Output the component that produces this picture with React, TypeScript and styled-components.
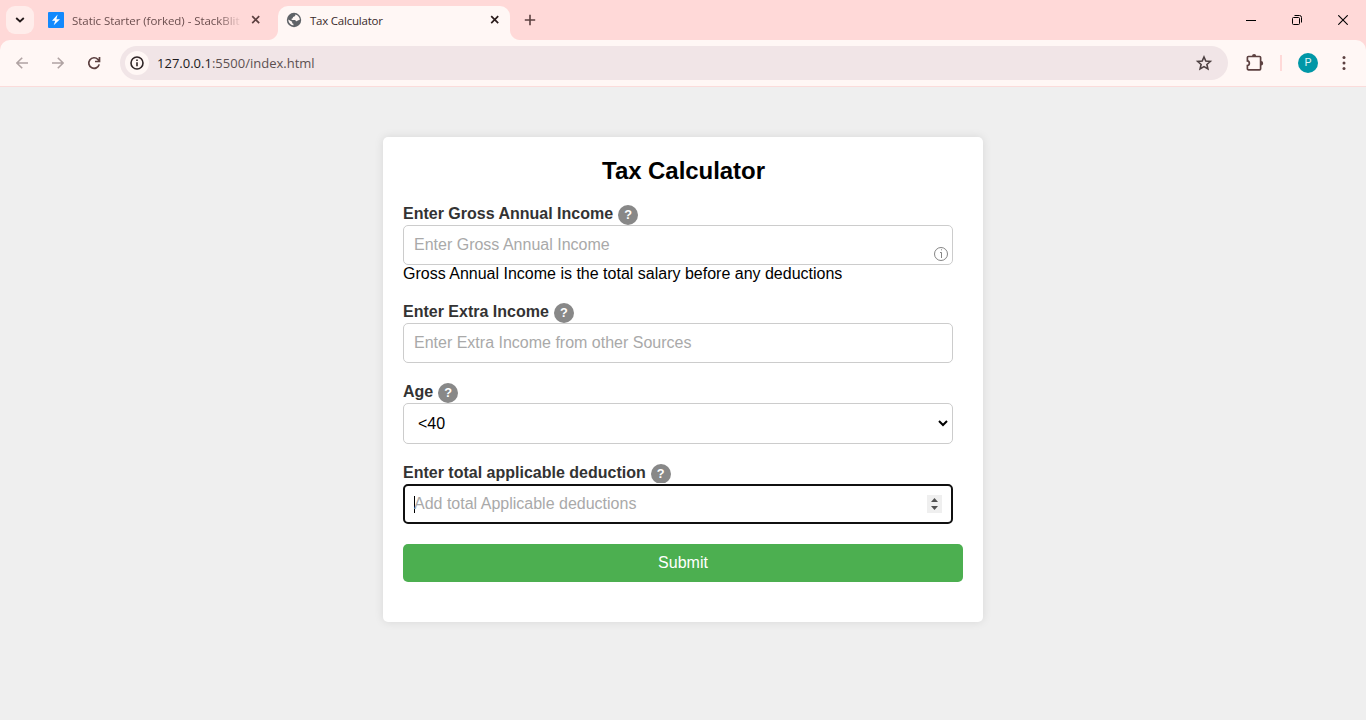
import React from "react";
import styled, { createGlobalStyle } from "styled-components";

const GlobalStyle = createGlobalStyle`
  *, *::before, *::after { box-sizing: border-box; }
  body { margin: 0; background: #efefef; font-family: "Liberation Sans", Arial, sans-serif; }
`;

const Window = styled.div`
  width: 1366px;
  height: 720px;
  overflow: hidden;
  background: #efefef;
`;

const TabStrip = styled.div`
  display: flex;
  height: 40px;
  background: #ffd9d8;
  font-family: "Open Sans", "Noto Sans", sans-serif;
`;

const TabSearch = styled.div`
  width: 28px;
  height: 28px;
  margin: 6px 0 0 6px;
  border-radius: 9px;
  background: #ffedeb;
  display: grid;
  place-items: center;
`;

const Tab = styled.div<{ $active?: boolean }>`
  position: relative;
  display: flex;
  align-items: center;
  width: ${(p) => (p.$active ? 232 : 230)}px;
  height: ${(p) => (p.$active ? 34 : 28)}px;
  margin: 6px 0 0 ${(p) => (p.$active ? 0 : 14)}px;
  padding: 0 9px ${(p) => (p.$active ? 6 : 0)}px ${(p) => (p.$active ? 8 : 0)}px;
  border-radius: 10px 10px 0 0;
  background: ${(p) => (p.$active ? "#fff7f5" : "transparent")};
  color: ${(p) => (p.$active ? "#3a2b2b" : "#6a4d4d")};

  &::before,
  &::after {
    content: "";
    display: ${(p) => (p.$active ? "block" : "none")};
    position: absolute;
    bottom: 0;
    width: 10px;
    height: 10px;
  }
  &::before {
    left: -10px;
    background: radial-gradient(circle at 0 0, transparent 9.5px, #fff7f5 10.5px);
  }
  &::after {
    right: -10px;
    background: radial-gradient(circle at 100% 0, transparent 9.5px, #fff7f5 10.5px);
  }
`;

const TabTitle = styled.span<{ $fade?: boolean }>`
  flex: none;
  width: 170px;
  margin-left: 8px;
  padding-top: 1px;
  white-space: nowrap;
  font-size: 11.5px;
  line-height: 18px;
  letter-spacing: ${(p) => (p.$fade ? "-0.05px" : "-0.22px")};
  ${(p) => p.$fade && "mask-image: linear-gradient(to right, #000 145px, transparent 171px);"}
`;

const TabClose = styled.span<{ $end: number }>`
  display: grid;
  place-items: center;
  margin: 0 ${(p) => p.$end}px 0 auto;
`;

const NewTab = styled.div`
  width: 12px;
  height: 40px;
  margin-left: 14px;
  display: grid;
  place-items: center;
`;

const WindowButtons = styled.div`
  display: flex;
  margin-left: auto;
`;

const WindowButton = styled.div`
  width: 46px;
  height: 40px;
  display: grid;
  place-items: center;
`;

const ToolbarBack = styled.div`
  background: #ffd9d8;
`;

const Toolbar = styled.div`
  display: flex;
  align-items: center;
  height: 47px;
  padding-left: 4px;
  border-radius: 10px 10px 0 0;
  border-bottom: 1px solid #fbdcdb;
  background: #fff7f5;
  font-family: "Open Sans", "Noto Sans", sans-serif;
`;

const ToolButton = styled.div`
  width: 36px;
  height: 34px;
  display: grid;
  place-items: center;
`;

const AddressBar = styled.div`
  display: flex;
  align-items: center;
  width: 1108px;
  height: 34px;
  margin-left: 8px;
  padding: 0 14px 0 5px;
  border-radius: 17px;
  background: #f1e5e7;
`;

const SiteInfo = styled.div`
  width: 24px;
  height: 24px;
  border-radius: 50%;
  background: #fff7f5;
  display: grid;
  place-items: center;
`;

const Address = styled.span`
  flex: 1;
  margin-left: 8px;
  font-size: 13px;
  line-height: 20px;
  letter-spacing: 0.01px;
  color: #5c5051;

  b {
    font-weight: 400;
    color: #201a1b;
  }
`;

const Extensions = styled.div`
  width: 20px;
  height: 20px;
  margin-left: 17px;
`;

const Divider = styled.div`
  width: 2px;
  height: 16px;
  margin-left: 15px;
  background: #ffd9d8;
`;

const Avatar = styled.div`
  width: 20px;
  height: 20px;
  margin-left: 16px;
  border-radius: 50%;
  background: #0097a7;
  color: #e0f4f5;
  font: 11px/20px Roboto, sans-serif;
  text-align: center;
`;

const MenuButton = styled.div`
  width: 20px;
  height: 20px;
  margin-left: 16px;
`;

const Page = styled.main`
  display: flex;
  justify-content: center;
  align-items: flex-start;
  padding-top: 50px;
`;

const Card = styled.form`
  width: 600px;
  height: 485px;
  padding: 20px;
  border-radius: 5px;
  background: #fff;
  box-shadow: 0 0 10px rgba(0, 0, 0, 0.1);
`;

const Title = styled.h2`
  margin: 0 0 20px;
  padding-left: 1px;
  font-size: 24px;
  line-height: 28px;
  letter-spacing: -0.05px;
  text-align: center;
  color: #000;
`;

const Field = styled.div`
  margin-bottom: 20px;
`;

const LabelRow = styled.div`
  display: flex;
  gap: 5px;
  height: 20px;
`;

const Label = styled.label`
  height: 18px;
  font-size: 16px;
  font-weight: 700;
  line-height: 18px;
  color: #333;
`;

const HelpDot = styled.span`
  width: 20px;
  height: 20px;
  border-radius: 50%;
  background: #888;
  color: #fff;
  font-size: 12.800px;
  font-weight: 700;
  line-height: 19px;
  text-align: center;
`;

const Control = styled.div<{ $kind?: "select" | "focused" }>`
  display: flex;
  align-items: center;
  position: relative;
  width: 550px;
  height: ${(p) => (p.$kind === "select" ? 41 : 40)}px;
  padding: 0 ${(p) => (p.$kind ? 4 : 3)}px 0 ${(p) => (p.$kind === "select" ? 14 : 10)}px;
  border: 1px solid #ccc;
  border-radius: 5px;
  background: #fff;
  font-size: 16px;
  line-height: 18px;
  color: ${(p) => (p.$kind === "select" ? "#000" : "#a9a9a9")};
  ${(p) =>
    p.$kind === "focused" &&
    `border: 2px solid #101010;
     padding: 0 9px;
     box-shadow: 0 -1px 0 #fff;`}
`;

const ControlText = styled.span`
  flex: 1;
`;

const SelectArrow = styled.svg`
  margin-top: -2px;
`;

const Caret = styled.span`
  width: 1px;
  height: 17px;
  margin: 1px -1px 0 0;
  background: #000;
`;

const InfoMark = styled.span`
  display: block;
  height: 16px;
  margin-top: 18px;
`;

const Spinner = styled.span`
  display: block;
  width: 15px;
  height: 18px;
  background: #efefef;
`;

const Hint = styled.p`
  margin: 0;
  font-size: 16px;
  line-height: 18px;
  color: #000;
`;

const Submit = styled.button`
  display: block;
  width: 560px;
  height: 38px;
  padding: 0 0 1px;
  border: 0;
  border-radius: 5px;
  background: #4caf50;
  color: #fff;
  font: 16px/18px "Liberation Sans", Arial, sans-serif;
`;

const Cross = ({ color }: { color: string }) => (
  <svg width="10" height="10" viewBox="0 0 10 10" fill="none" stroke={color} strokeWidth="1.7">
    <path d="m1.200 1.200 7 7M8.200 1.200l-7 7" />
  </svg>
);

const Arrow = ({ flip }: { flip?: boolean }) => (
  <svg width="12" height="12" viewBox="0 0 12 12" fill="none" stroke="#b0a3a3" strokeWidth="1.6">
    <path d={flip ? "M0 6h11M5.8.7 11.1 6 5.8 11.3" : "M12 6H1M6.2.7.9 6l5.3 5.3"} />
  </svg>
);

const FieldLabel = ({ text }: { text: string }) => (
  <LabelRow>
    <Label>{text}</Label>
    <HelpDot>?</HelpDot>
  </LabelRow>
);

const BrowserTabs = () => (
  <TabStrip>
    <TabSearch>
      <svg width="10" height="8" viewBox="0 0 10 8" fill="none" stroke="#231a1a" strokeWidth="1.8">
        <path d="m1.200 2 3.800 3.500L8.800 2" />
      </svg>
    </TabSearch>
    <Tab>
      <svg width="16" height="16" viewBox="0 0 16 16">
        <rect width="16" height="16" rx="1" fill="#1389fd" />
        <path d="M9.6 2.600 4 8.800h3.200l-1.500 4.500L12 7.200H8.400z" fill="#fff" />
      </svg>
      <TabTitle $fade>Static Starter (forked) - StackBlit</TabTitle>
      <TabClose $end={8}><Cross color="#5c4040" /></TabClose>
    </Tab>
    <Tab $active>
      <svg width="16" height="16" viewBox="0 0 16 16">
        <circle cx="8" cy="8" r="7.200" fill="#5f6368" />
        <path
          d="M9.200 2.400c.3 1-.1 1.700-1 2.100-.9.300-1.400.5-1.300 1.300 0 .6-.6.9-1.300.9-.3.900.2 1.200 1.100 1.200h1.800c1 0 1.300.6 1.400 1.400.8.100 1.300-.1 1.800-.7.500-.5 1-.7 2-.6.300-2.500-1.400-4.900-4.500-5.600zM2.300 7.600c0 2.900 2 5.400 5 5.800l.2-1.600c-1 0-1.400-.6-1.400-1.500v-.6z"
          fill="#fff7f5"
        />
      </svg>
      <TabTitle>Tax Calculator</TabTitle>
      <TabClose $end={1}><Cross color="#2b1c1c" /></TabClose>
    </Tab>
    <NewTab>
      <svg width="12" height="12" viewBox="0 0 12 12" fill="none" stroke="#5c4040" strokeWidth="1.6">
        <path d="M6 .8v10.400M.8 6h10.400" />
      </svg>
    </NewTab>
    <WindowButtons>
      <WindowButton>
        <svg width="10" height="10" viewBox="0 0 10 10"><path d="M0 5h10v1H0z" fill="#000" /></svg>
      </WindowButton>
      <WindowButton>
        <svg width="10" height="10" viewBox="0 0 10 10" fill="none" stroke="#000">
          <rect x=".5" y="2.5" width="7" height="7" rx="1" />
          <path d="M2.500.5h5a2 2 0 0 1 2 2v5" />
        </svg>
      </WindowButton>
      <WindowButton>
        <svg width="10" height="10" viewBox="0 0 10 10" fill="none" stroke="#000" strokeWidth="1.1">
          <path d="m.3.3 9.400 9.400M9.700.3.3 9.700" />
        </svg>
      </WindowButton>
    </WindowButtons>
  </TabStrip>
);

const BrowserToolbar = () => (
  <ToolbarBack>
    <Toolbar>
      <ToolButton><Arrow /></ToolButton>
      <ToolButton><Arrow flip /></ToolButton>
      <ToolButton>
        <svg width="14" height="14" viewBox="0 0 14 14" fill="none" stroke="#5c4040" strokeWidth="1.7">
          <path d="M12.200 8.400A5.300 5.300 0 1 1 11 3.500l1.200 1.300M12.500 1v4.500H8" />
        </svg>
      </ToolButton>
      <AddressBar>
        <SiteInfo>
          <svg width="14" height="14" viewBox="0 0 14 14" fill="none" stroke="#2e2425" strokeWidth="1.6">
            <circle cx="7" cy="7" r="6" />
            <path d="M7 6.300v4M7 3.600v1.500" />
          </svg>
        </SiteInfo>
        <Address><b>127.0.0.1</b>:5500/index.html</Address>
        <svg width="20" height="20" viewBox="0 0 20 20" fill="none" stroke="#4d4042" strokeWidth="1.6">
          <path d="m10 4 1.800 4.100 4.500.4-3.400 3 1 4.400L10 13.600l-3.900 2.300 1-4.400-3.400-3 4.500-.4z" />
        </svg>
      </AddressBar>
      <Extensions>
        <svg width="20" height="20" viewBox="0 0 20 20">
          <path
            d="M3.400 3.500h11.200a1 1 0 0 1 1 1v11.300a1 1 0 0 1-1 1H3.400a1 1 0 0 1-1-1v-3.300c2.600-.3 2.600-4.300 0-4.600V4.500a1 1 0 0 1 1-1z"
            fill="none" stroke="#5c4040" strokeWidth="1.7"
          />
          <path d="M7 3.200a2.100 2.100 0 0 1 4.200 0zM16 8a2.200 2.200 0 0 1 0 4.400z" fill="#5c4040" />
        </svg>
      </Extensions>
      <Divider />
      <Avatar>P</Avatar>
      <MenuButton>
        <svg width="20" height="20" viewBox="0 0 20 20" fill="#5c4040">
          <circle cx="10" cy="4.600" r="1.500" />
          <circle cx="10" cy="10" r="1.500" />
          <circle cx="10" cy="15.400" r="1.500" />
        </svg>
      </MenuButton>
    </Toolbar>
  </ToolbarBack>
);

export default function App() {
  return (
    <Window>
      <GlobalStyle />
      <BrowserTabs />
      <BrowserToolbar />
      <Page>
        <Card>
          <Title>Tax Calculator</Title>
          <Field>
            <FieldLabel text="Enter Gross Annual Income" />
            <Control>
              <ControlText>Enter Gross Annual Income</ControlText>
              <InfoMark>
                <svg width="16" height="16" viewBox="0 0 16 16" fill="none" stroke="#666" strokeWidth=".8">
                  <circle cx="8" cy="8" r="6.500" />
                  <path d="M7 6.500h1.500v5.500M8 3.800h1" />
                </svg>
              </InfoMark>
            </Control>
            <Hint>Gross Annual Income is the total salary before any deductions</Hint>
          </Field>
          <Field>
            <FieldLabel text="Enter Extra Income" />
            <Control>
              <ControlText>Enter Extra Income from other Sources</ControlText>
            </Control>
          </Field>
          <Field>
            <FieldLabel text="Age" />
            <Control $kind="select">
              <ControlText>&lt;40</ControlText>
              <SelectArrow width="10" height="8" viewBox="0 0 10 8" fill="none" stroke="#000" strokeWidth="2">
                <path d="m1 2 4 4 4-4" />
              </SelectArrow>
            </Control>
          </Field>
          <Field>
            <FieldLabel text="Enter total applicable deduction" />
            <Control $kind="focused">
              <Caret />
              <ControlText>Add total Applicable deductions</ControlText>
              <Spinner>
                <svg width="15" height="18" viewBox="0 0 15 18" fill="#505050">
                  <path d="M4 7h7L7.500 3zM4 11h7l-3.500 4z" />
                </svg>
              </Spinner>
            </Control>
          </Field>
          <Submit type="button">Submit</Submit>
        </Card>
      </Page>
    </Window>
  );
}
